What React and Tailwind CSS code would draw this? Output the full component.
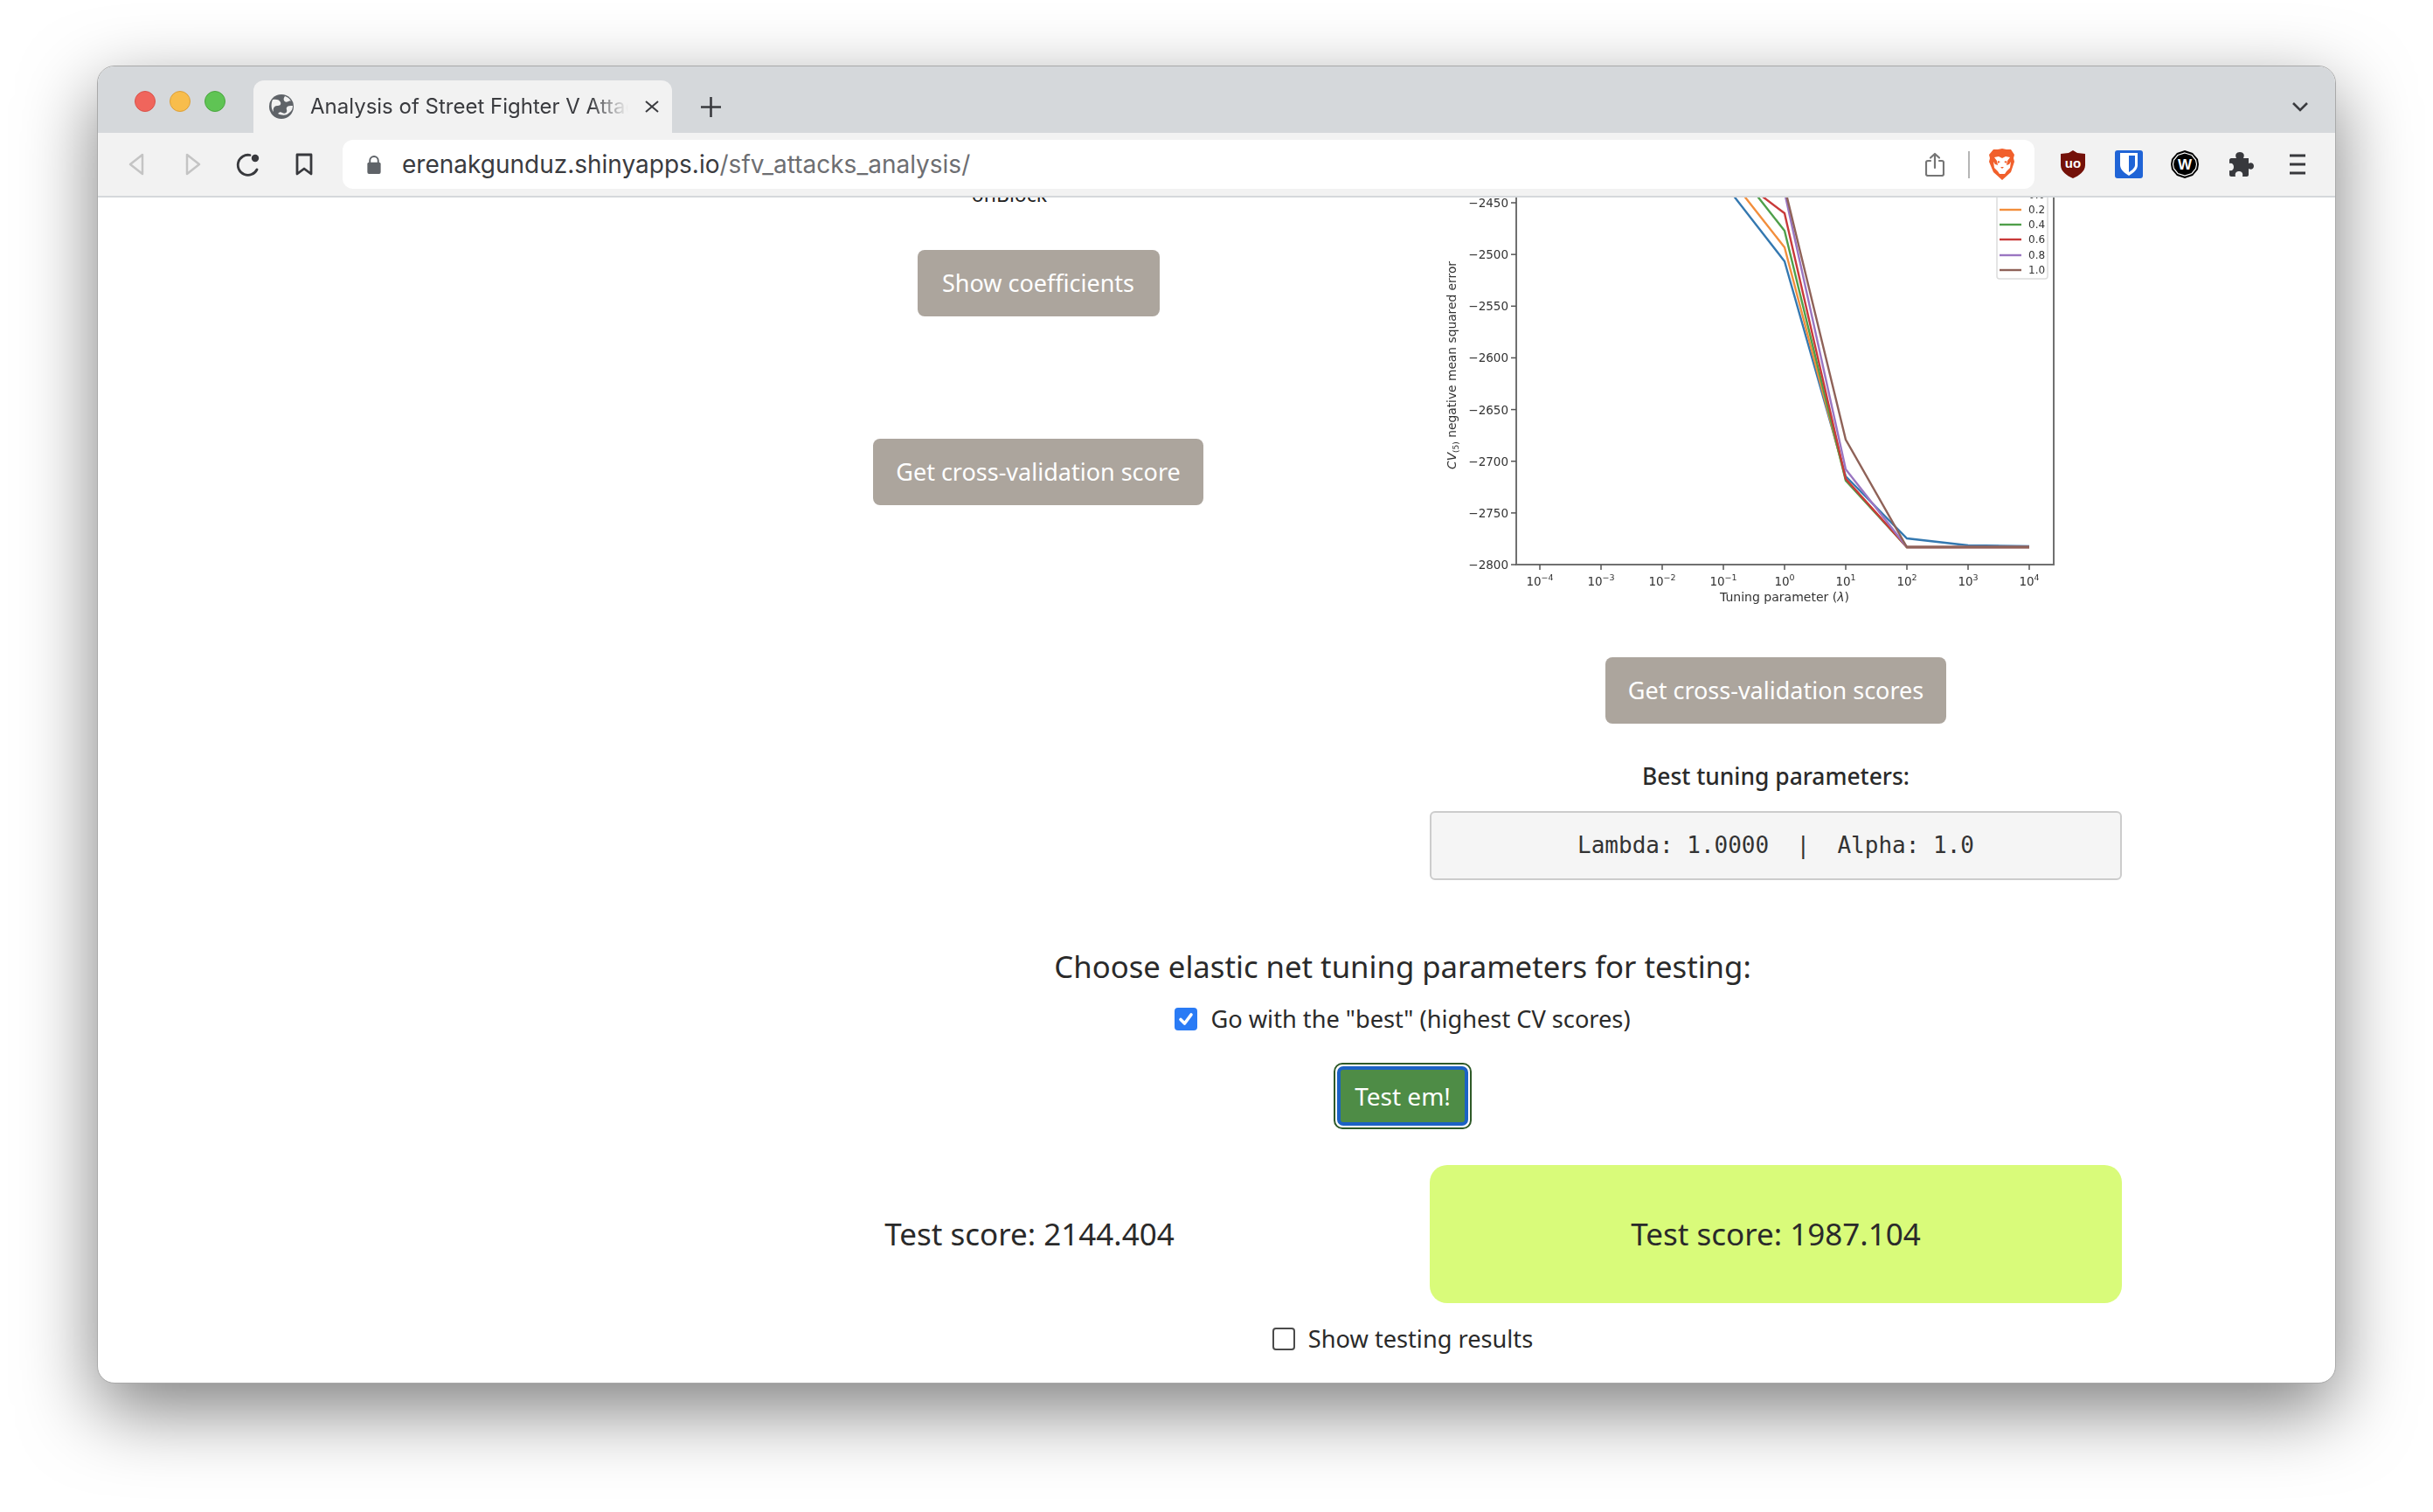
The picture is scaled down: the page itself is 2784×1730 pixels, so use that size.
import React from "react";

const ticksY = [-2450, -2500, -2550, -2600, -2650, -2700, -2750, -2800];
const ticksX = ["−4", "−3", "−2", "−1", "0", "1", "2", "3", "4"];

const series = [
  { color: "#3478b0", pts: "1972,209 2042,299 2112,545 2182,616 2252,624 2322,625" },
  { color: "#f28e3c", pts: "1972,194 2042,283 2112,548 2182,626 2252,626 2322,626" },
  { color: "#4f9f4a", pts: "1972,175 2042,264 2112,550 2182,626 2252,626 2322,626" },
  { color: "#c93a3a", pts: "1972,191 2042,244 2112,548 2182,626 2252,626 2322,626" },
  { color: "#9a76c2", pts: "2030,150 2042,220 2112,537 2182,626 2252,626 2322,626" },
  { color: "#8f6258", pts: "2030,150 2042,214 2112,503 2182,626 2252,626 2322,626" },
];

const legend = [
  { y: 223, color: "#3478b0", label: "0.0" },
  { y: 240, color: "#f28e3c", label: "0.2" },
  { y: 257, color: "#4f9f4a", label: "0.4" },
  { y: 274, color: "#c93a3a", label: "0.6" },
  { y: 292, color: "#9a76c2", label: "0.8" },
  { y: 309, color: "#8f6258", label: "1.0" },
];

// viewBox uses page coordinates of the plot image
const Chart = () => (
  <svg viewBox="1636 226 792 490" className="w-[792px] h-[490px] block blur-[0.4px]" style={{ fontFamily: "DejaVu Sans, sans-serif" }}>
    {series.map((s) => (
      <polyline key={s.color} points={s.pts} fill="none" stroke={s.color} strokeWidth="2.4" />
    ))}
    <path d="M1735 226V646H2350V226" fill="none" stroke="#707070" strokeWidth="2" />
    {ticksY.map((t, i) => {
      const y = 232 + i * 59.15;
      return (
        <g key={t}>
          <line x1="1729" x2="1735" y1={y} y2={y} stroke="#555" strokeWidth="1.5" />
          <text x="1726" y={y + 5} textAnchor="end" fontSize="13.5" fill="#333">{"−" + Math.abs(t)}</text>
        </g>
      );
    })}
    {ticksX.map((t, i) => {
      const x = 1762 + i * 70;
      return (
        <g key={t}>
          <line x1={x} x2={x} y1="646" y2="652" stroke="#555" strokeWidth="1.5" />
          <text x={x} y="670" textAnchor="middle" fontSize="13.5" fill="#333">
            10<tspan dy="-6" fontSize="9.5">{t}</tspan>
          </text>
        </g>
      );
    })}
    <text x="2042" y="688" textAnchor="middle" fontSize="14" fill="#333">
      Tuning parameter (<tspan fontStyle="italic">λ</tspan>)
    </text>
    <text transform="translate(1666 418) rotate(-90)" textAnchor="middle" fontSize="13.8" fill="#333">
      <tspan fontStyle="italic">CV</tspan><tspan fontSize="9" dy="3">(5)</tspan><tspan dy="-3"> negative mean squared error</tspan>
    </text>
    <rect x="2285" y="200" width="58" height="119" rx="3" fill="#fff" stroke="#dcdcdc" strokeWidth="1.5" />
    {legend.map((l) => (
      <g key={l.label}>
        <line x1="2288" x2="2313" y1={l.y} y2={l.y} stroke={l.color} strokeWidth="2.4" />
        <text x="2321" y={l.y + 4} fontSize="12" fill="#333">{l.label}</text>
      </g>
    ))}
  </svg>
);

const Globe = () => (
  <svg viewBox="0 0 28 28" className="w-[28px] h-[28px]">
    <circle cx="14" cy="14" r="14" fill="#5f6368" />
    <path d="M4 6c4-1 8 0 9 3s-1 4-4 4-5 3-4 7C2 17 2 10 4 6zM27 13c-3 0-6 0-7 2s1 3 0 5-3 2-5 1-3-1-5 1c4 2 9 3 13-1 3-2 4-5 4-8zM18 2c-1 2-2 3-1 5s3 2 5 1 2-1 3 0c-1-3-4-5-7-6z" fill="#f2f2f2" />
  </svg>
);

const Brave = () => (
  <svg viewBox="0 0 32 36" className="w-[32px] h-[36px]">
    <path d="M6 1h5l5-1 5 1h5l4 6-1 4 1 4-4 12-10 9-10-9L1 15l1-4-1-4z" fill="#f1602c" />
    <path d="M7 10l5-1 4 2 4-2 5 1-3 4-1 5 3-1 2-3-1 7-4 4-2 3h-6l-2-3-4-4-1-7 2 3 3 1-1-5z" fill="#fff" />
    <path d="M14 21h4l-2 2zM11 14l3 1-3 2zM21 14l-3 1 3 2z" fill="#f1602c" />
  </svg>
);

const UBlock = () => (
  <svg viewBox="0 0 28 32" className="w-[28px] h-[32px]">
    <path d="M14 0l5 3 9 1v13c0 7-7 12-14 15C7 29 0 24 0 17V4l9-1z" fill="#741109" />
    <text x="14" y="20" textAnchor="middle" fontSize="15" fontWeight="700" fill="#fff" fontFamily="Liberation Sans, sans-serif">uo</text>
  </svg>
);

const Bitwarden = () => (
  <svg viewBox="0 0 32 32" className="w-[32px] h-[32px]">
    <rect width="32" height="32" rx="3" fill="#2064d6" />
    <path d="M6 3h20v14c0 5-5 9-10 12-5-3-10-7-10-12z" fill="#fff" />
    <path d="M16 6h7v11c0 3-4 6-7 8z" fill="#2064d6" />
  </svg>
);

const Windscribe = () => (
  <svg viewBox="0 0 32 32" className="w-[32px] h-[32px]">
    <path d="M16 0l9 3 6 7 1 6-1 6-6 7-9 3-9-3-6-7-1-6 1-6 6-7z" fill="#000" />
    <path d="M16 3l8 2.500 4.500 5.500 1 5-1 5-4.500 5.500-8 2.500-8-2.500L3.500 21l-1-5 1-5L8 5.500z" fill="#000" stroke="#fff" strokeWidth="1.2" />
    <text x="16" y="22" textAnchor="middle" fontSize="17" fontWeight="700" fill="#fff" fontFamily="Liberation Sans, sans-serif">W</text>
  </svg>
);

const Puzzle = () => (
  <svg viewBox="0 0 28 28" className="w-[28px] h-[28px]">
    <path d="M2 7h6c-2-4 0-7 4-7s6 3 4 7h6v6c3-2 6 0 6 3s-3 5-6 3v7c0 1-1 2-2 2h-5c1-4-1-6-4-6s-5 2-4 6H2c-1 0-2-1-2-2v-5c3 1 5-1 5-4s-2-5-5-4v-4c0-1 1-2 2-2z" fill="#38393d" />
  </svg>
);

const Share = () => (
  <svg viewBox="0 0 22 28" className="w-[22px] h-[28px]" fill="none" stroke="#757575" strokeWidth="2.2" strokeLinecap="round" strokeLinejoin="round">
    <path d="M6 10H3c-1 0-2 1-2 2v13c0 1 1 2 2 2h16c1 0 2-1 2-2V12c0-1-1-2-2-2h-3" />
    <path d="M11 18V2M6 6.500L11 2l5 4.500" />
  </svg>
);

const CheckBox = ({ checked }) =>
  checked ? (
    <span className="w-[26px] h-[26px] rounded-[4px] bg-[#2a7bf5] flex items-center justify-center">
      <svg viewBox="0 0 26 26" className="w-[26px] h-[26px]" fill="none" stroke="#fff" strokeWidth="3.6" strokeLinecap="round" strokeLinejoin="round">
        <path d="M7 13.500l4.500 4.500L19 8" />
      </svg>
    </span>
  ) : (
    <span className="w-[26px] h-[26px] rounded-[4px] border-2 border-[#4b4b4b] bg-white" />
  );

const GrayButton = ({ label, className = "" }) => (
  <button className={"h-[76px] rounded-[8px] bg-[#aca59d] text-white text-[27px] " + className}>{label}</button>
);

export default function App() {
  return (
    <div className="w-[2784px] h-[1730px] bg-white overflow-hidden pt-[75px] pl-[111px] font-['Noto_Sans',sans-serif] text-[#2a2a2a]">
      <div className="w-[2562px] h-[1508px] rounded-[20px] border border-[#a9a9a9] bg-white overflow-hidden shadow-[0_30px_85px_rgba(0,0,0,0.5)] flex flex-col">
        {/* tab strip */}
        <div className="h-[76px] shrink-0 bg-[#d5d8db] flex items-end pl-[42px] pr-[31px]">
          <div className="self-start mt-[28px] flex gap-[16px]">
            <span className="w-[24px] h-[24px] rounded-full bg-[#f0655c] border border-[#d9534b]" />
            <span className="w-[24px] h-[24px] rounded-full bg-[#f8bd4c] border border-[#dca03a]" />
            <span className="w-[24px] h-[24px] rounded-full bg-[#5fc454] border border-[#4aa63f]" />
          </div>
          <div className="ml-[32px] w-[479px] h-[60px] rounded-t-[12px] bg-[#f2f2f2] flex items-center pl-[18px] font-['Inter',sans-serif] text-[#3a3b3f]">
            <Globe />
            <span className="ml-[19px] w-[364px] overflow-hidden whitespace-nowrap text-[24px] [mask-image:linear-gradient(to_right,black_88%,transparent)]">
              Analysis of Street Fighter V Attacks
            </span>
            <svg viewBox="0 0 16 14" className="w-[16px] h-[14px] ml-[19px]" fill="none" stroke="#3a3b3f" strokeWidth="2">
              <path d="M1 1l14 12M15 1L1 13" />
            </svg>
          </div>
          <svg viewBox="0 0 23 23" className="w-[23px] h-[23px] ml-[33px] mb-[18px]" fill="none" stroke="#3a3b3f" strokeWidth="2.600">
            <path d="M11.500 0v23M0 11.500h23" />
          </svg>
          <svg viewBox="0 0 18 11" className="w-[18px] h-[11px] ml-auto mb-[24px]" fill="none" stroke="#3a3b3f" strokeWidth="2.600">
            <path d="M1 1l8 8 8-8" />
          </svg>
        </div>

        {/* toolbar */}
        <div className="h-[74px] shrink-0 bg-[#f2f2f2] border-b-2 border-[#d5d8db] flex items-center">
          <svg viewBox="0 0 18 26" className="w-[18px] h-[26px] ml-[35px]" fill="none" stroke="#c4c4c4" strokeWidth="2.500" strokeLinejoin="round">
            <path d="M16 2v22L2 13z" />
          </svg>
          <svg viewBox="0 0 18 26" className="w-[18px] h-[26px] ml-[47px]" fill="none" stroke="#c4c4c4" strokeWidth="2.500" strokeLinejoin="round">
            <path d="M2 2v22l14-11z" />
          </svg>
          <svg viewBox="0 0 27 27" className="w-[27px] h-[27px] ml-[40px]" fill="none" stroke="#38393d" strokeWidth="2.800">
            <path d="M24 19A11.500 11.500 0 1 1 16 2.500" strokeLinecap="round" />
            <circle cx="22" cy="6" r="4.200" fill="#38393d" stroke="none" />
          </svg>
          <svg viewBox="0 0 20 26" className="w-[20px] h-[26px] ml-[41px]" fill="none" stroke="#38393d" strokeWidth="2.800" strokeLinejoin="round">
            <path d="M2 2h16v22l-8-6-8 6z" />
          </svg>
          <div className="ml-[34px] w-[1936px] h-[56px] bg-white rounded-[12px] flex items-center pl-[27px] pr-[21px] font-['Inter',sans-serif]">
            <svg viewBox="0 0 18 22" className="w-[18px] h-[21px]">
              <path d="M4 10V6a5 5 0 0 1 10 0v4" fill="none" stroke="#5f6368" strokeWidth="2" />
              <rect x="1" y="8" width="16" height="14" rx="2" fill="#5f6368" />
            </svg>
            <span className="ml-[23px] text-[28px] text-[#3a3b3f] whitespace-nowrap">
              erenakgunduz.shinyapps.io<span className="text-[#6d6e72]">/sfv_attacks_analysis/</span>
            </span>
            <div className="ml-auto flex items-center">
              <Share />
              <span className="w-[2px] h-[31px] bg-[#b5b5b5] ml-[27px]" />
              <span className="ml-[21px] flex"><Brave /></span>
            </div>
          </div>
          <span className="ml-[30px] flex"><UBlock /></span>
          <span className="ml-[34px] flex"><Bitwarden /></span>
          <span className="ml-[32px] flex"><Windscribe /></span>
          <span className="ml-[35px] flex"><Puzzle /></span>
          <svg viewBox="0 0 18 24" className="w-[18px] h-[24px] ml-[41px]" fill="none" stroke="#38393d" strokeWidth="2.800">
            <path d="M0 2h18M0 12h18M0 22h18" />
          </svg>
        </div>

        {/* page content */}
        <div className="flex-1 overflow-hidden">
          <div className="ml-[680px] w-[1636px]">
            <div className="grid grid-cols-[792px_792px] gap-x-[52px]">
              <div className="flex flex-col items-center">
                <p className="-mt-[24px] h-[40px] leading-[40px] text-[23px] pr-[66px] text-[#222]">onBlock</p>
                <GrayButton label="Show coefficients" className="mt-[44px] w-[277px]" />
                <GrayButton label="Get cross-validation score" className="mt-[140px] w-[378px]" />
              </div>
              <div className="flex flex-col items-center">
                <Chart />
                <GrayButton label="Get cross-validation scores" className="mt-[36px] w-[390px]" />
                <p className="mt-[40px] h-[40px] leading-[40px] text-[26.400px] font-medium">Best tuning parameters:</p>
                <pre className="mt-[20px] w-full h-[79px] rounded-[6px] border-2 border-[#cccccc] bg-[#f5f5f5] flex items-center justify-center font-['DejaVu_Sans_Mono',monospace] text-[26px] text-[#333]">
                  {"Lambda: 1.0000  |  Alpha: 1.0"}
                </pre>
              </div>
            </div>

            <div className="flex flex-col items-center pr-[10px]">
              <h3 className="mt-[74px] h-[50px] leading-[50px] text-[34.700px]">Choose elastic net tuning parameters for testing:</h3>
              <label className="mt-[15px] h-[40px] flex items-center gap-[15px] text-[27.200px]">
                <CheckBox checked />
                Go with the "best" (highest CV scores)
              </label>
              <div className="mt-[30px] w-[158px] h-[76px] rounded-[10px] border-2 border-[#2e5a28] bg-white p-[2px]">
                <button className="w-full h-full rounded-[7px] border-[4px] border-[#1c62c4] bg-[#4e8c46] text-white text-[28px]">Test em!</button>
              </div>
            </div>

            <div className="mt-[41px] grid grid-cols-[792px_792px] gap-x-[52px] text-[35px]">
              <div className="flex items-center justify-center pr-[20px]">Test score: 2144.404</div>
              <div className="h-[158px] rounded-[20px] bg-[#d9fb7a] flex items-center justify-center">Test score: 1987.104</div>
            </div>

            <label className="mt-[21px] h-[40px] flex items-center justify-center gap-[15px] text-[27.200px] pr-[10px]">
              <CheckBox />
              Show testing results
            </label>
          </div>
        </div>
      </div>
    </div>
  );
}
